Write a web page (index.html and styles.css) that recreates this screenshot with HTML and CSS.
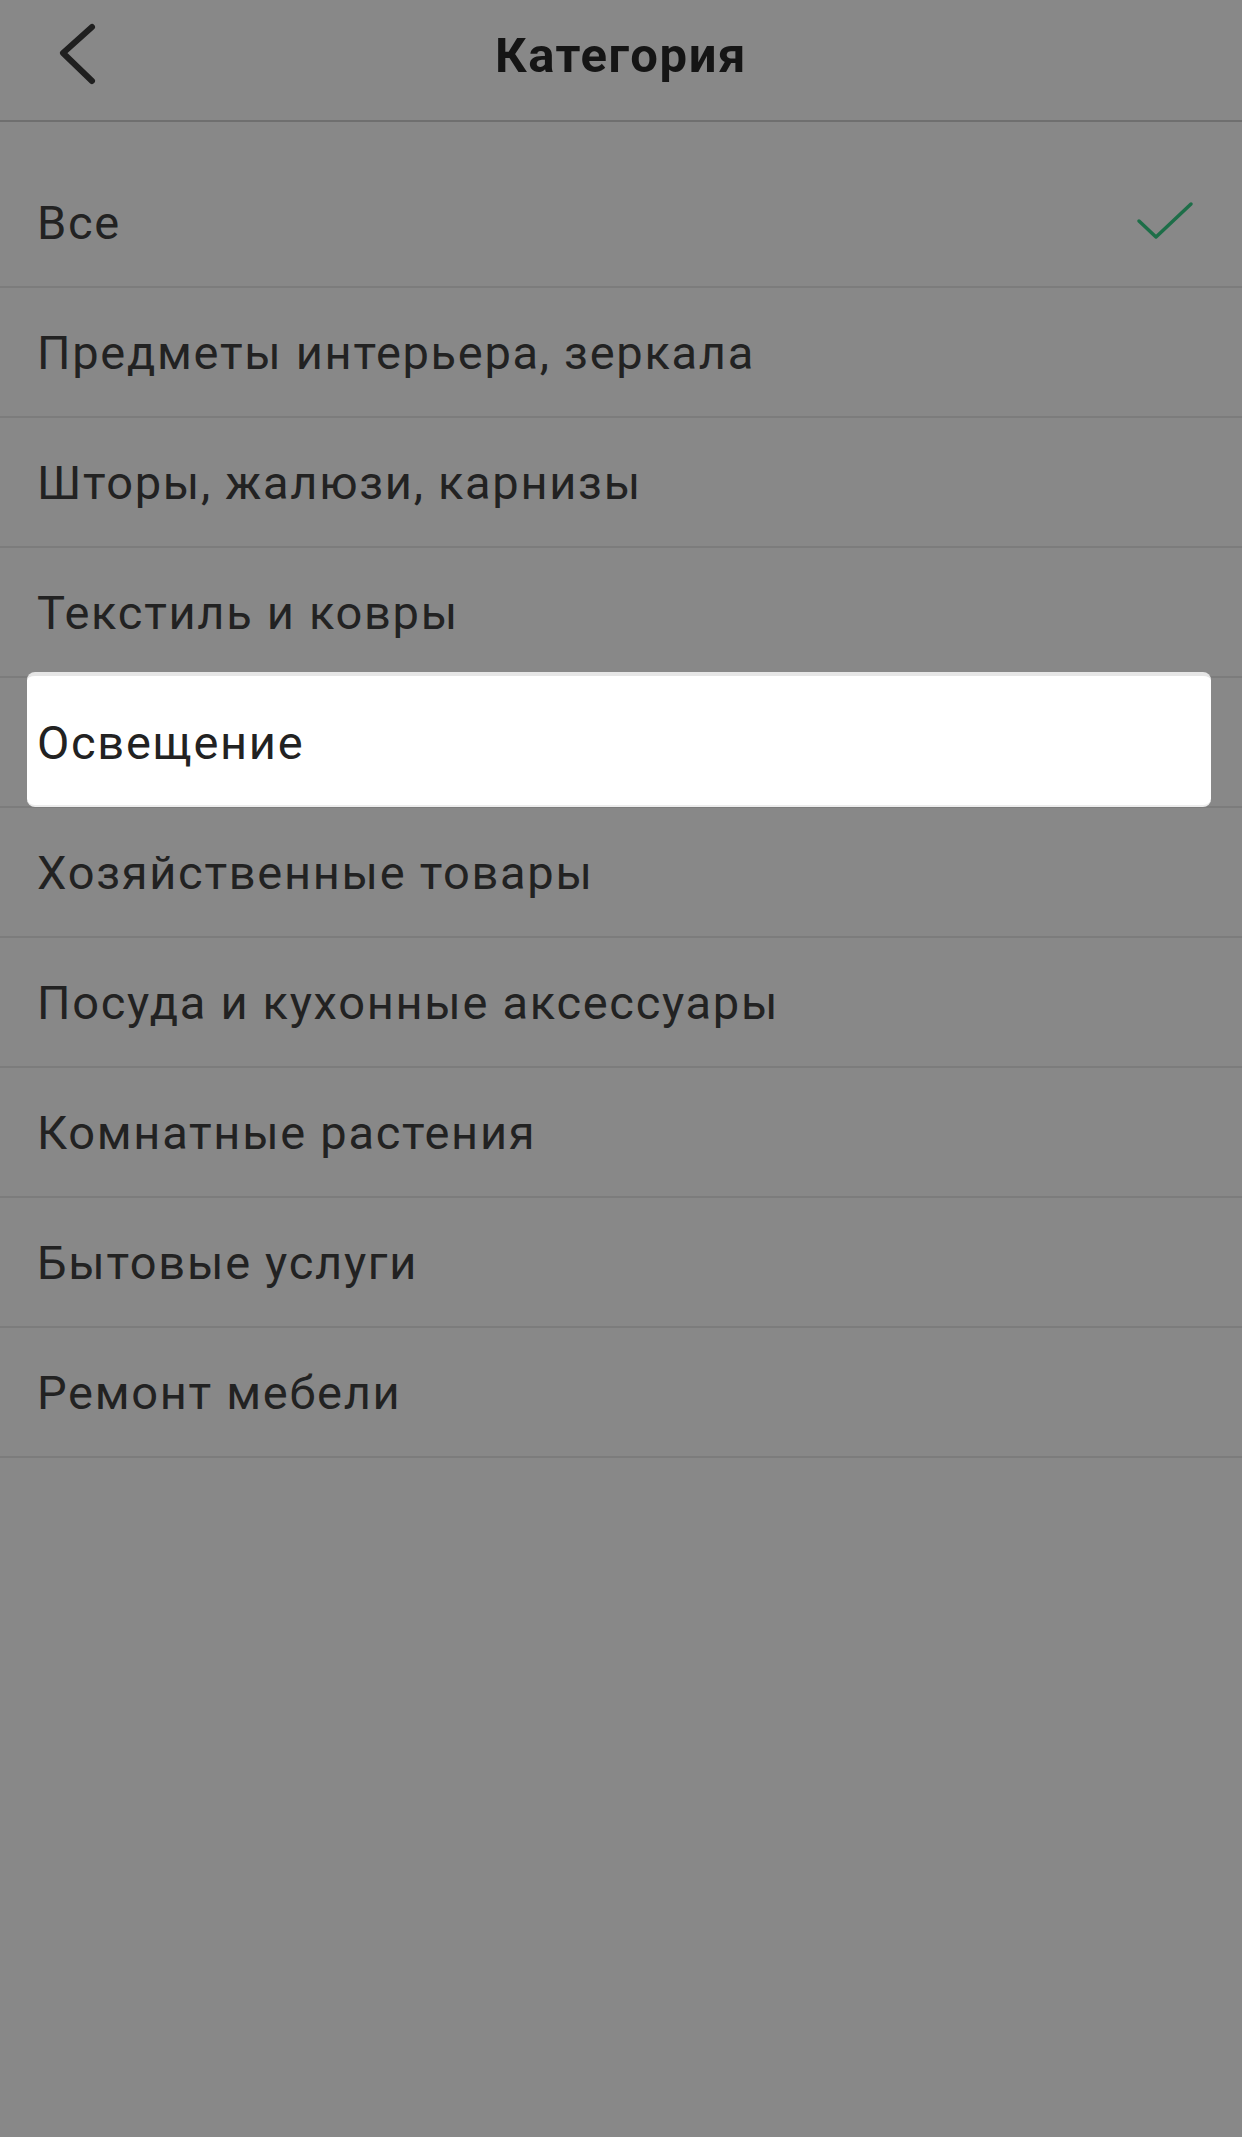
FILE: index.html
```html
<!DOCTYPE html>
<html lang="ru">
<head>
    <meta charset="UTF-8">
    <meta name="viewport" content="width=device-width, initial-scale=1.0">
    <title>Категория</title>
    <link rel="stylesheet" href="styles.css">
</head>
<body>
    <div class="screen">
        <header class="top-bar">
            <button class="back-btn" aria-label="Назад">
                <svg width="60" height="80" viewBox="0 0 60 80">
                    <polyline points="41,12 12,38 41,66" fill="none" stroke="#1f1f1f" stroke-width="6" stroke-linecap="round" stroke-linejoin="round"/>
                </svg>
            </button>
            <h1>Категория</h1>
        </header>

        <!-- Category list -->
        <ul class="category-list">
            <li class="category-item selected">
                <span>Все</span>
                <svg class="check" width="60" height="44" viewBox="0 0 60 44">
                    <polyline points="4,21 21,37 56,4" fill="none" stroke="#1d6e48" stroke-width="3.5" stroke-linecap="round" stroke-linejoin="round"/>
                </svg>
            </li>
            <li class="category-item"><span>Предметы интерьера, зеркала</span></li>
            <li class="category-item"><span>Шторы, жалюзи, карнизы</span></li>
            <li class="category-item"><span>Текстиль и ковры</span></li>
            <li class="category-item dragging"><span>Освещение</span></li>
            <li class="category-item"><span>Хозяйственные товары</span></li>
            <li class="category-item"><span>Посуда и кухонные аксессуары</span></li>
            <li class="category-item"><span>Комнатные растения</span></li>
            <li class="category-item"><span>Бытовые услуги</span></li>
            <li class="category-item"><span>Ремонт мебели</span></li>
        </ul>
    </div>
</body>
</html>
```

FILE: styles.css
```css
* {
    margin: 0;
    padding: 0;
    box-sizing: border-box;
}

body {
    font-family: Roboto, 'Noto Sans', 'DejaVu Sans', sans-serif;
    background: #888888;
    color: #222222;
    width: 1242px;
    min-height: 2137px;
}

.top-bar {
    position: relative;
    height: 122px;
    display: flex;
    align-items: center;
    justify-content: center;
    border-bottom: 2px solid #6f6f6f;
}

.top-bar h1 {
    font-size: 49px;
    font-weight: 700;
    letter-spacing: 1.6px;
    color: #151515;
    margin-top: -10px;
}

.back-btn {
    position: absolute;
    left: 51px;
    top: 15px;
    background: none;
    border: none;
    cursor: pointer;
}

.back-btn svg {
    display: block;
}

.category-list {
    list-style: none;
    padding-top: 36px;
}

.category-item {
    position: relative;
    height: 130px;
    display: flex;
    align-items: center;
    justify-content: space-between;
    padding: 0 37px;
    font-size: 47px;
    letter-spacing: 1.7px;
    border-bottom: 2px solid #7c7c7c;
}

.category-item .check {
    margin-right: 10px;
}

.category-item.dragging {
    z-index: 1;
}

.category-item.dragging::before {
    content: '';
    position: absolute;
    left: 27px;
    right: 31px;
    top: -6px;
    bottom: -1px;
    background: #ffffff;
    border-top: 4px solid #e6e6e6;
    border-bottom: 2px solid #ececec;
    border-radius: 8px;
}

.category-item.dragging span {
    position: relative;
}
```
